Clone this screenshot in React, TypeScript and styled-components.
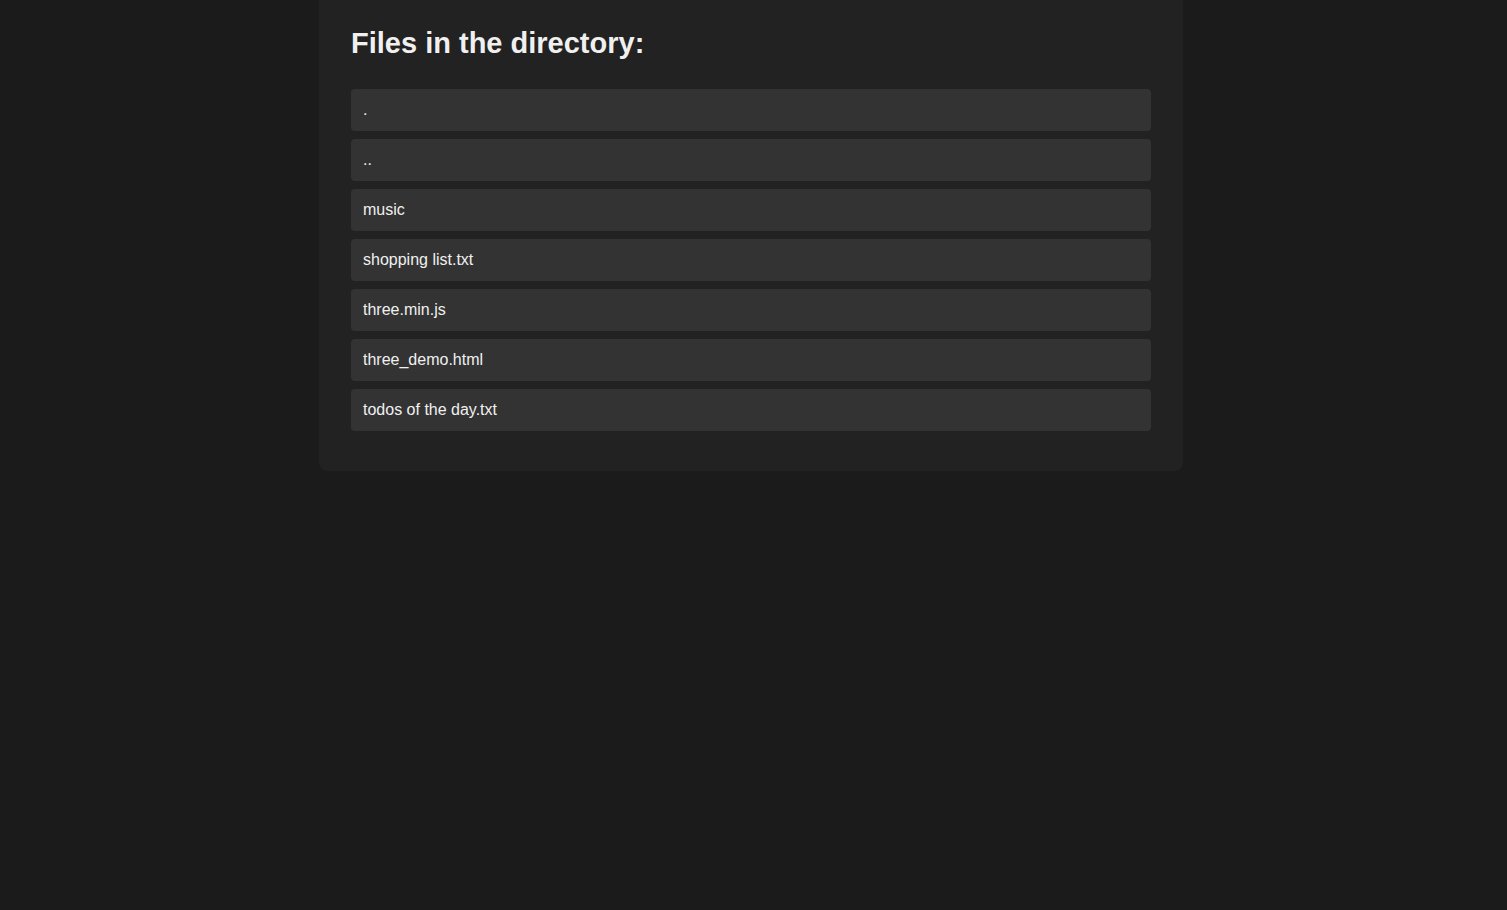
import React from "react";
import styled, { createGlobalStyle } from "styled-components";

const Global = createGlobalStyle`
  html, body { margin: 0; padding: 0; background: #1b1b1b; }
  body { font-family: "Liberation Sans", Arial, sans-serif; color: #eeeeee; }
`;

const Page = styled.div`
  display: flex;
  justify-content: center;
  padding-right: 5px;
`;

const Panel = styled.main`
  width: 800px;
  padding: 27px 32px 40px;
  background: #222222;
  border-radius: 0 0 8px 8px;
`;

const Title = styled.h1`
  margin: 0 0 30px;
  font-size: 29px;
  line-height: 32px;
  font-weight: bold;
  color: #f0f0f0;
`;

const List = styled.ul`
  list-style: none;
  margin: 0;
  padding: 0;
  display: flex;
  flex-direction: column;
  gap: 8px;
`;

const Item = styled.li`
  background: #333333;
  border-radius: 4px;
  padding: 12px;
  font-size: 16px;
  line-height: 18px;
  color: #f0f0f0;
`;

const files = [".", "..", "music", "shopping list.txt", "three.min.js", "three_demo.html", "todos of the day.txt"];

export default function App() {
  return (
    <Page>
      <Global />
      <Panel>
        <Title>Files in the directory:</Title>
        <List>
          {files.map((f) => (
            <Item key={f}>{f}</Item>
          ))}
        </List>
      </Panel>
    </Page>
  );
}
